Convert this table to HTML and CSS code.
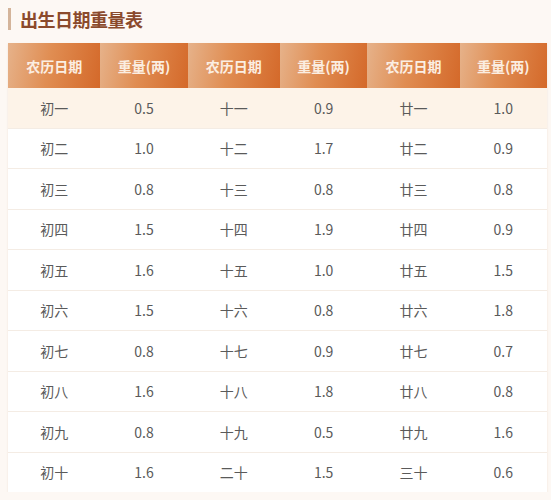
FILE: index.html
```html
<!DOCTYPE html>
<html lang="zh">
<head>
<meta charset="utf-8">
<link rel="stylesheet" href="styles.css">
</head>
<body>
<div class="page">
  <h2 class="title">出生日期重量表</h2>
  <table class="weight">
    <colgroup>
      <col class="c-date"><col class="c-w"><col class="c-date"><col class="c-w"><col class="c-date"><col class="c-w">
    </colgroup>
    <thead>
      <tr><th>农历日期</th><th>重量(两)</th><th>农历日期</th><th>重量(两)</th><th>农历日期</th><th>重量(两)</th></tr>
    </thead>
    <tbody>
      <tr class="first"><td>初一</td><td>0.5</td><td>十一</td><td>0.9</td><td>廿一</td><td>1.0</td></tr>
      <tr><td>初二</td><td>1.0</td><td>十二</td><td>1.7</td><td>廿二</td><td>0.9</td></tr>
      <tr><td>初三</td><td>0.8</td><td>十三</td><td>0.8</td><td>廿三</td><td>0.8</td></tr>
      <tr><td>初四</td><td>1.5</td><td>十四</td><td>1.9</td><td>廿四</td><td>0.9</td></tr>
      <tr><td>初五</td><td>1.6</td><td>十五</td><td>1.0</td><td>廿五</td><td>1.5</td></tr>
      <tr><td>初六</td><td>1.5</td><td>十六</td><td>0.8</td><td>廿六</td><td>1.8</td></tr>
      <tr><td>初七</td><td>0.8</td><td>十七</td><td>0.9</td><td>廿七</td><td>0.7</td></tr>
      <tr><td>初八</td><td>1.6</td><td>十八</td><td>1.8</td><td>廿八</td><td>0.8</td></tr>
      <tr><td>初九</td><td>0.8</td><td>十九</td><td>0.5</td><td>廿九</td><td>1.6</td></tr>
      <tr><td>初十</td><td>1.6</td><td>二十</td><td>1.5</td><td>三十</td><td>0.6</td></tr>
    </tbody>
  </table>
</div>
</body>
</html>
```

FILE: styles.css
```css
html, body {
  margin: 0;
  padding: 0;
  background: #fdf8f4;
}
body {
  font-family: "Noto Sans CJK SC", "Noto Sans", sans-serif;
  color: #555;
}
.page {
  padding: 8px 4px 0 8px;
}
.title {
  margin: 0;
  height: 22px;
  line-height: 22px;
  border-left: 3px solid #d4b49a;
  padding-left: 9px;
  font-size: 18px;
  font-weight: 700;
  color: #8b4a2c;
  letter-spacing: -0.5px;
}
.weight {
  margin-top: 13px;
  width: 539px;
  border-collapse: collapse;
  table-layout: fixed;
  background: #fff;
  box-shadow: 0 1px 2px rgba(200, 170, 140, 0.25);
}
.c-date { width: 92px; }
.c-w { width: 87px; }
.weight th {
  height: 45px;
  padding: 0;
  font-size: 14px;
  font-weight: 700;
  color: #fbeee2;
  background: linear-gradient(100deg, #e6b28a 0%, #e08d52 45%, #d4692a 100%);
  text-align: center;
}
.weight td {
  height: 39.5px;
  padding: 0;
  font-size: 14px;
  color: #5a5a5a;
  text-align: center;
  border-bottom: 1px solid #f4ece4;
}
.weight tr.first td {
  background: #fdf3e8;
}
.weight tbody tr:last-child td {
  border-bottom: none;
}
```
